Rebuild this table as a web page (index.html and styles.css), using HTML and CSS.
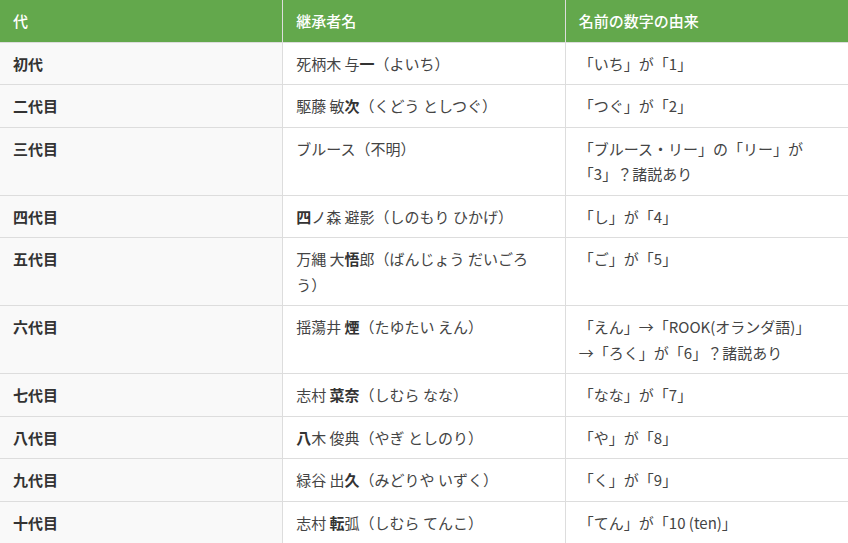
FILE: index.html
```html
<!DOCTYPE html>
<html lang="ja">
<head>
<meta charset="utf-8">
<link rel="stylesheet" href="styles.css">
</head>
<body>
<table class="heirs">
  <thead>
    <tr><th>代</th><th>継承者名</th><th>名前の数字の由来</th></tr>
  </thead>
  <tbody>
    <tr><td class="gen">初代</td><td>死柄木 与<b>一</b>（よいち）</td><td>「いち」が「1」</td></tr>
    <tr><td class="gen">二代目</td><td>駆藤 敏<b>次</b>（くどう としつぐ）</td><td>「つぐ」が「2」</td></tr>
    <tr><td class="gen">三代目</td><td>ブルース（不明）</td><td>「ブルース・リー」の「リー」が「3」？諸説あり</td></tr>
    <tr><td class="gen">四代目</td><td><b>四</b>ノ森 避影（しのもり ひかげ）</td><td>「し」が「4」</td></tr>
    <tr><td class="gen">五代目</td><td>万縄 大<b>悟</b>郎（ばんじょう だいごろう）</td><td>「ご」が「5」</td></tr>
    <tr><td class="gen">六代目</td><td>揺蕩井 <b>煙</b>（たゆたい えん）</td><td>「えん」→「ROOK(オランダ語)」<span class="keep">→「ろく」が「6」？諸説あり</span></td></tr>
    <tr><td class="gen">七代目</td><td>志村 <b>菜奈</b>（しむら なな）</td><td>「なな」が「7」</td></tr>
    <tr><td class="gen">八代目</td><td><b>八</b>木 俊典（やぎ としのり）</td><td>「や」が「8」</td></tr>
    <tr><td class="gen">九代目</td><td>緑谷 出<b>久</b>（みどりや いずく）</td><td>「く」が「9」</td></tr>
    <tr><td class="gen">十代目</td><td>志村 <b>転</b>弧（しむら てんこ）</td><td>「てん」が「10 (ten)」</td></tr>
  </tbody>
</table>
</body>
</html>
```
FILE: styles.css
```css
html, body {
  margin: 0;
  padding: 0;
  background: #ffffff;
}
body {
  font-family: "Noto Sans CJK JP", "Noto Sans", sans-serif;
  font-size: 15px;
  line-height: 1.7;
  color: #444;
  text-spacing-trim: space-all;
  line-break: normal;
}
.keep {
  white-space: nowrap;
}
.heirs {
  width: 100%;
  border-collapse: collapse;
  table-layout: fixed;
}
.heirs th, .heirs td {
  padding: 8px 13px;
  text-align: left;
  vertical-align: top;
  border: 1px solid #dddddd;
}
.heirs tr > :first-child { border-left: none; }
.heirs tr > :last-child { border-right: none; }
.heirs th {
  background: #63a84c;
  color: #ffffff;
  font-weight: 500;
  border-top: none;
  border-bottom: none;
}
.heirs td.gen {
  background: #f9f9f9;
  font-weight: bold;
  color: #333;
}
.heirs b {
  font-weight: bold;
  color: #333;
}
```
